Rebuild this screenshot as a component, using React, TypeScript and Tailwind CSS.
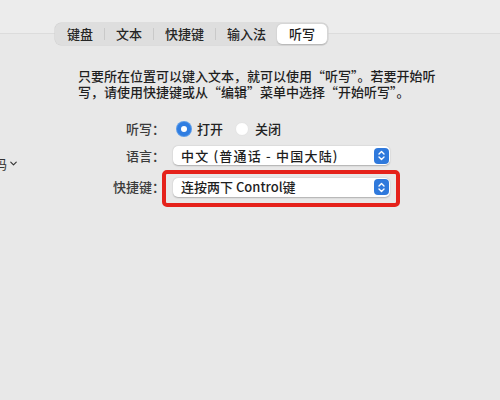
import { ChevronDown } from 'lucide-react';

const tabs = ['键盘', '文本', '快捷键', '输入法', '听写'];

function Radio({ checked, label }: { checked?: boolean; label: string }) {
  return (
    <div className="flex items-center gap-[6px]">
      {checked ? (
        <span className="w-[14px] h-[14px] rounded-full bg-[#2f7de1] flex items-center justify-center shadow-[0_0_0_1px_#5a9be8]">
          <span className="w-[6px] h-[6px] rounded-full bg-white" />
        </span>
      ) : (
        <span className="w-[14px] h-[14px] rounded-full bg-white border border-[#e4e4e4]" />
      )}
      <span className="text-[13px] font-medium text-[#222]">{label}</span>
    </div>
  );
}

function Stepper() {
  return (
    <span className="w-[15px] h-[16px] rounded-[4px] bg-[#2f79dc] flex items-center justify-center">
      <svg width="9" height="11" viewBox="0 0 9 11" fill="none" stroke="white" strokeWidth="1.4" strokeLinecap="round" strokeLinejoin="round">
        <path d="M2 4 L4.5 1.6 L7 4" />
        <path d="M2 7 L4.5 9.4 L7 7" />
      </svg>
    </span>
  );
}

function Popup({ text, wide }: { text: string; wide?: boolean }) {
  return (
    <div className="w-[217px] h-[19px] bg-white rounded-[5px] shadow-[0_0.5px_1.5px_rgba(0,0,0,0.25)] flex items-center justify-between pl-[8px] pr-[1px]">
      <span className={wide ? 'text-[13px] font-medium tracking-[1.2px] text-[#1e1e1e]' : 'text-[13px] font-medium text-[#1e1e1e]'}>
        {text}
      </span>
      <Stepper />
    </div>
  );
}

export default function App() {
  return (
    <div
      className="w-[500px] h-[400px] bg-[#e8e8e8] overflow-hidden"
      style={{ fontFamily: '"Noto Sans CJK SC", "Noto Sans", sans-serif' }}
    >
      {/* top band */}
      <div className="h-[34px] bg-[#ececec] border-b border-[#dcdcdc]" />

      {/* segmented tabs */}
      <div className="-mt-[11px] pl-[55px] flex">
        <div className="flex h-[22px] rounded-[6px] bg-[#dedede] shadow-[0_0_0_0.5px_#cfcfcf] p-[1px] items-center">
          {tabs.map((t, i) => (
            <div key={t} className="flex items-center">
              {i > 0 && i < 4 && <span className="w-px h-[12px] bg-[#c9c9c9]" />}
              <div
                className={
                  i === 4
                    ? 'h-[20px] px-[12px] flex items-center rounded-[5px] bg-white shadow-[0_0.5px_1.5px_rgba(0,0,0,0.2)] text-[13px] font-medium text-[#1e1e1e]'
                    : 'h-[20px] px-[11px] flex items-center text-[13px] font-medium text-[#262626]'
                }
              >
                {t}
              </div>
            </div>
          ))}
        </div>
      </div>

      {/* description */}
      <p className="mt-[23px] ml-[78px] text-[13px] font-medium leading-[16px] text-[#1f1f1f] whitespace-nowrap">
        只要所在位置可以键入文本，就可以使用“听写”。若要开始听
        <br />
        写，请使用快捷键或从“编辑”菜单中选择“开始听写”。
      </p>

      {/* form */}
      <div className="mt-[19px] flex">
        <div className="w-[20px] pt-[35px]">
          <div className="-ml-[6px] flex items-center gap-[1px] text-[13px] text-[#333]">
            <span>码</span>
            <ChevronDown size={11} strokeWidth={2.5} />
          </div>
        </div>

        <div className="flex flex-col">
          <div className="flex items-center h-[20px]">
            <span className="w-[145px] text-right text-[13px] font-medium text-[#3a3a3a]">听写：</span>
            <div className="ml-[12px] flex items-center gap-[12px]">
              <Radio checked label="打开" />
              <Radio label="关闭" />
            </div>
          </div>

          <div className="flex items-center h-[19px] mt-[7px]">
            <span className="w-[145px] text-right text-[13px] font-medium text-[#3a3a3a]">语言：</span>
            <div className="ml-[8px]">
              <Popup text="中文 (普通话 - 中国大陆)" wide />
            </div>
          </div>

          <div className="flex items-center h-[20px] mt-[12px]">
            <span className="w-[145px] text-right text-[13px] font-medium text-[#3a3a3a]">快捷键：</span>
            <div className="ml-[8px] relative">
              <Popup text="连按两下 Control键" />
              {/* annotation */}
              <div className="absolute -left-[11px] -right-[10px] -top-[8px] -bottom-[10px] border-[4px] border-[#e5221b] rounded-[5px]" />
            </div>
          </div>
        </div>
      </div>
    </div>
  );
}
